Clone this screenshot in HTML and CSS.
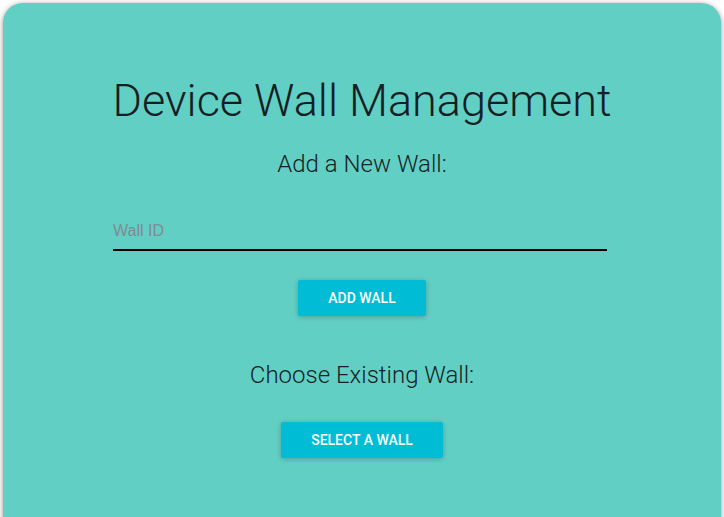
FILE: index.html
```html
<!DOCTYPE html>
<html>
<head>
<meta charset="utf-8">
<link rel="stylesheet" href="styles.css">
</head>
<body>
<div class="card">
  <h1 class="title">Device Wall Management</h1>
  <h2 class="subtitle">Add a New Wall:</h2>
  <div class="field">
    <input class="input" type="text" placeholder="Wall ID">
  </div>
  <button class="btn btn-add">Add Wall</button>
  <h2 class="subtitle subtitle-choose">Choose Existing Wall:</h2>
  <button class="btn btn-select">Select a Wall</button>
</div>
</body>
</html>
```
FILE: styles.css
```css
html, body {
  margin: 0;
  padding: 0;
  background: #ffffff;
  overflow: hidden;
}
body {
  padding: 3px 3px 0 3px;
  font-family: Roboto, "Liberation Sans", sans-serif;
}
.card {
  background: #62cfc5;
  border-radius: 20px;
  height: 560px;
  box-shadow: 0 1px 6px rgba(0,0,0,0.25), 0 1px 4px rgba(0,0,0,0.2);
  display: flex;
  flex-direction: column;
  align-items: center;
  padding-top: 70px;
  box-sizing: border-box;
}
.title {
  margin: 0;
  font-weight: 300;
  font-size: 45px;
  line-height: 56px;
  color: #161f24;
}
.subtitle {
  margin: 20px 0 0 0;
  font-weight: 300;
  font-size: 24px;
  line-height: 30px;
  color: #161f24;
}
.field {
  width: 494px;
  margin-top: 42px;
  margin-right: 4px;
}
.input {
  width: 100%;
  box-sizing: border-box;
  border: none;
  border-bottom: 2px solid #000;
  background: transparent;
  padding: 0 0 8px 0;
  font-family: "Liberation Sans", Arial, sans-serif;
  font-size: 16px;
  line-height: 20px;
  outline: none;
}
.input::placeholder {
  color: #7e8c94;
}
.btn {
  border: none;
  background: #00bcd4;
  color: #fff;
  font-family: Roboto, "Liberation Sans", sans-serif;
  font-weight: 500;
  font-size: 14px;
  text-transform: uppercase;
  height: 36px;
  border-radius: 2px;
  box-shadow: 0 1px 6px rgba(0,0,0,0.12), 0 1px 4px rgba(0,0,0,0.12);
}
.btn-add {
  width: 128px;
  margin-top: 29px;
}
.subtitle-choose {
  margin-top: 44px;
}
.btn-select {
  width: 162px;
  margin-top: 32px;
}
```
